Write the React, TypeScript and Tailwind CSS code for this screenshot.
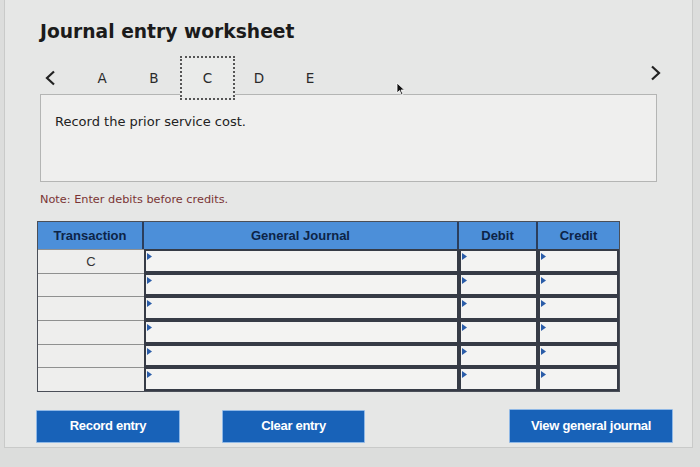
import React from 'react'

const rows = ['C', '', '', '', '', '']

function Tri() {
  return (
    <svg className="absolute left-[1px] top-[2px]" width="5" height="7" viewBox="0 0 5 7">
      <path d="M0 0 L5 3.5 L0 7 Z" fill="#2a5ca8" />
    </svg>
  )
}

function InputCell({ w }: { w: string }) {
  return (
    <div className={`relative h-full ${w} border-2 border-[#363b46] bg-[#f3f3f2]`}>
      <Tri />
    </div>
  )
}

export default function App() {
  return (
    <div className="w-[700px] h-[467px] bg-[#dcdddc] font-['DejaVu_Sans',sans-serif] overflow-hidden">
      <div className="relative ml-[4px] w-[689px] h-[448px] bg-[#e6e7e6] border-x border-b border-[#c9cac9] pl-[35px] pt-[20px]">
        <h1 className="text-[18.7px] font-bold leading-[24px] text-[#1b1b1b]">Journal entry worksheet</h1>

        {/* tabs */}
        <div className="mt-[12px] flex items-center h-[44px] w-[628px] text-[13.5px] text-[#2a2a2a]">
          <div className="w-[36px] pl-[4px]">
            <svg width="12" height="16" viewBox="0 0 12 16">
              <path d="M10 1.5 L3 8 L10 14.5" fill="none" stroke="#222" strokeWidth="2.2" />
            </svg>
          </div>
          <div className="w-[52px] text-center">A</div>
          <div className="w-[52px] text-center">B</div>
          <div className="relative z-10 w-[55px] h-[44px] flex items-center justify-center border-2 border-dotted border-[#555] bg-[#eaebea]">C</div>
          <div className="w-[48px] text-center">D</div>
          <div className="w-[54px] text-center">E</div>
          <div className="flex-1" />
          <svg width="12" height="16" viewBox="0 0 12 16" className="mr-[6px] -mt-[10px]">
            <path d="M2 1.5 L9 8 L2 14.5" fill="none" stroke="#222" strokeWidth="2.2" />
          </svg>
        </div>

        {/* prompt */}
        <div className="-mt-[6px] w-[617px] h-[88px] bg-[#efefee] border border-[#b4b5b4] pl-[14px] pt-[18px]">
          <p className="text-[13px] leading-[17px] text-[#222]">Record the prior service cost.</p>
        </div>

        <p className="mt-[11px] text-[11.3px] leading-[14px] text-[#7a3434]">Note: Enter debits before credits.</p>

        {/* table */}
        <div className="mt-[14px] -ml-[3px] w-[583px] border border-[#4a4f58] font-['Liberation_Sans',sans-serif]">
          <div className="flex h-[27px] bg-[#4c8fd9] text-[13px] font-bold text-[#0d2447]">
            <div className="w-[106px] flex items-center justify-center border-r-2 border-[#2b3e5c]">Transaction</div>
            <div className="w-[315px] flex items-center justify-center border-r-2 border-[#2b3e5c]">General Journal</div>
            <div className="w-[79px] flex items-center justify-center border-r-2 border-[#2b3e5c]">Debit</div>
            <div className="flex-1 flex items-center justify-center">Credit</div>
          </div>
          {rows.map((t, i) => (
            <div key={i} className="flex h-[23.7px]">
              <div className="w-[106px] h-full flex items-center justify-center border-t border-[#8f9090] bg-[#eeeeed] text-[13px] text-[#333]">
                {t}
              </div>
              <InputCell w="w-[315px]" />
              <InputCell w="w-[79px]" />
              <InputCell w="flex-1" />
            </div>
          ))}
        </div>

        {/* buttons */}
        <div className="mt-[17px] -ml-[4px] flex items-center font-['Liberation_Sans',sans-serif] text-[13px] font-bold text-white tracking-[-0.3px]">
          <button className="w-[144px] h-[33px] bg-[#1862b8] border border-[#8fb8e6] rounded-[1px]">Record entry</button>
          <button className="ml-[42px] w-[143px] h-[33px] bg-[#1862b8] border border-[#8fb8e6] rounded-[1px]">Clear entry</button>
          <button className="ml-[144px] w-[164px] h-[34px] bg-[#1862b8] border border-[#8fb8e6] rounded-[1px]">View general journal</button>
        </div>

        {/* mouse pointer */}
        <svg className="absolute left-[391px] top-[82px]" width="10" height="14" viewBox="0 0 10 14">
          <path d="M1 1 L1 11 L3.5 8.5 L5.5 13 L7 12.3 L5 8 L8.5 8 Z" fill="#111" stroke="#fff" strokeWidth="0.8" />
        </svg>
      </div>
    </div>
  )
}
